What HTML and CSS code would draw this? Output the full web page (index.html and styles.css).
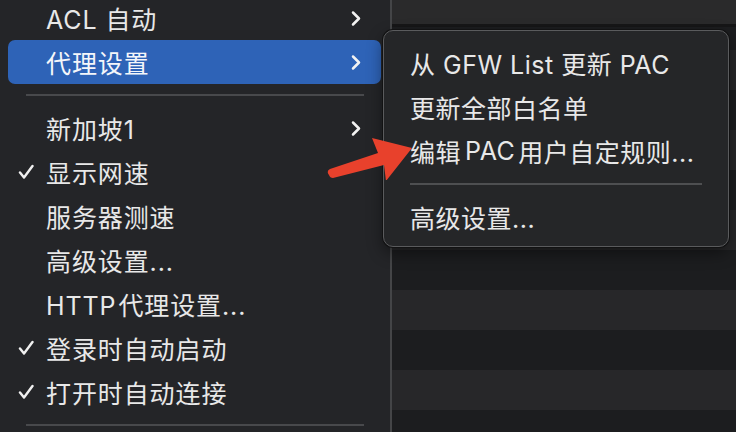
FILE: index.html
```html
<!DOCTYPE html>
<html lang="zh">
<head>
<meta charset="utf-8">
<link rel="stylesheet" href="styles.css">
</head>
<body>
<div class="screen">
  <div class="menu">
    <div class="item cut"><span class="label">ACL 自动</span><svg class="chev" viewBox="0 0 12 16"><path d="M3 2 L9 8 L3 14"/></svg></div>
    <div class="item active"><span class="label">代理设置</span><svg class="chev" viewBox="0 0 12 16"><path d="M3 2 L9 8 L3 14"/></svg></div>
    <div class="sep"></div>
    <div class="item"><span class="label">新加坡1</span><svg class="chev" viewBox="0 0 12 16"><path d="M3 2 L9 8 L3 14"/></svg></div>
    <div class="item"><svg class="check" viewBox="0 0 16 16"><path d="M2 8.5 L6 13.5 L14.5 2"/></svg><span class="label">显示网速</span></div>
    <div class="item"><span class="label">服务器测速</span></div>
    <div class="item"><span class="label">高级设置...</span></div>
    <div class="item"><span class="label"><span class="latin">HTTP</span>代理设置...</span></div>
    <div class="item"><svg class="check" viewBox="0 0 16 16"><path d="M2 8.5 L6 13.5 L14.5 2"/></svg><span class="label">登录时自动启动</span></div>
    <div class="item"><svg class="check" viewBox="0 0 16 16"><path d="M2 8.5 L6 13.5 L14.5 2"/></svg><span class="label">打开时自动连接</span></div>
    <div class="sep"></div>
  </div>
  <div class="pane">
    <div class="pane-head"></div>
    <div class="rows">
      <div class="row first"></div>
      <div class="row"></div>
      <div class="row"></div>
      <div class="row"></div>
      <div class="row"></div>
      <div class="row"></div>
      <div class="row"></div>
      <div class="row"></div>
      <div class="row"></div>
      <div class="row"></div>
      <div class="row"></div>
    </div>
  </div>

  <div class="submenu">
    <div class="sitem">从 GFW List 更新 PAC</div>
    <div class="sitem">更新全部白名单</div>
    <div class="sitem">编辑<span class="gap">PAC</span>用户自定规则...</div>
    <div class="ssep"></div>
    <div class="sitem">高级设置...</div>
  </div>

  <svg class="arrow" viewBox="0 0 100 60" width="100" height="60">
    <path d="M5 55 Q2 51 6 49 L54 33 L48 18 L88 28 L62 61 L60 45 L9 58 Q6 58 5 55 Z"/>
  </svg>
</div>
</body>
</html>
```

FILE: styles.css
```css
* { box-sizing: border-box; }
html, body {
  margin: 0;
  padding: 0;
  background: #242528;
}
body {
  width: 736px;
  height: 432px;
  overflow: hidden;
  font-family: Inter, "Noto Sans CJK SC", sans-serif;
  color: #e8e8e8;
}
.screen {
  position: relative;
  display: flex;
  width: 736px;
  height: 432px;
  overflow: hidden;
}
.menu {
  width: 390px;
  flex: none;
  background: #242528;
  padding: 0 9px 0 8px;
  margin-top: -4px;
}
.item {
  position: relative;
  display: flex;
  align-items: center;
  height: 44px;
  padding-left: 38px;
  padding-right: 19px;
  border-radius: 7px;
  font-size: 25px;
  letter-spacing: 0.9px;
}
.item .label { flex: 1; white-space: nowrap; }
.latin { margin-right: 2px; }
.item.active {
  background: #2e63b7;
  color: #f4f6fa;
}
.chev {
  width: 12px;
  height: 17px;
  fill: none;
  stroke: #f2f2f2;
  stroke-width: 2.5;
  stroke-linecap: round;
  stroke-linejoin: round;
}
.check {
  position: absolute;
  left: 10px;
  top: 14px;
  width: 16px;
  height: 16px;
  fill: none;
  stroke: #f0f0f0;
  stroke-width: 2.4;
  stroke-linecap: round;
  stroke-linejoin: round;
}
.sep {
  height: 22px;
  padding: 10px 17px 10px 18px;
}
.sep::before {
  content: "";
  display: block;
  height: 2px;
  background: #48494c;
}
.pane {
  flex: 1;
  display: flex;
  flex-direction: column;
  border-left: 2px solid #444547;
}
.pane-head {
  flex: none;
  height: 27px;
  background: #2a2a2b;
  border-bottom: 3px solid #161617;
}
.rows { flex: none; }
.row {
  height: 40px;
  background: #1c1d1f;
}
.row.first { height: 23px; }
.row:nth-child(even) { background: #272729; }

.submenu {
  position: absolute;
  left: 383px;
  top: 30px;
  width: 346px;
  height: 217px;
  background: #252628;
  border: 1.5px solid #5a5b5d;
  border-radius: 10px;
  box-shadow: 0 0 0 1px #121213, 0 6px 16px rgba(0, 0, 0, 0.45);
  padding: 10px 0 8px 26px;
}
.sitem {
  height: 44px;
  display: flex;
  align-items: center;
  font-size: 25px;
  letter-spacing: 0.5px;
  white-space: nowrap;
}
.gap { margin: 0 3px 0 4px; }
.ssep {
  height: 22px;
  padding: 10px 26px 10px 0;
}
.ssep::before {
  content: "";
  display: block;
  height: 2px;
  background: #4e4f51;
}
.arrow {
  position: absolute;
  left: 324px;
  top: 120px;
  fill: #e8412c;
}
```
